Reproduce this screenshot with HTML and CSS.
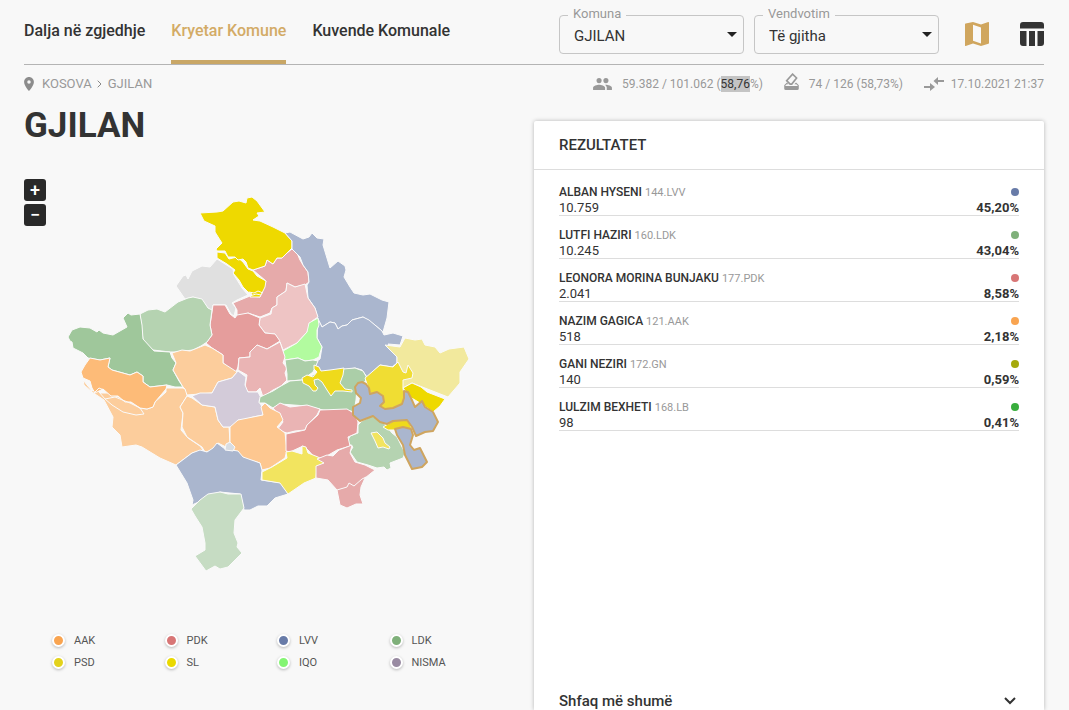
FILE: index.html
```html
<!DOCTYPE html>
<html lang="sq">
<head>
<meta charset="utf-8">
<title>Kryetar Komune – Gjilan</title>
<link rel="stylesheet" href="styles.css">
</head>
<body>
<div class="page">
  <header class="topbar">
    <nav class="tabs">
      <a class="tab" href="#dalja">Dalja në zgjedhje</a>
      <a class="tab tab-active" href="#kryetar">Kryetar Komune</a>
      <a class="tab" href="#kuvende">Kuvende Komunale</a>
    </nav>
    <div class="filters">
      <div class="field">
        <label class="field-label" for="komuna">Komuna</label>
        <select class="field-select" id="komuna"><option>GJILAN</option></select>
        <svg class="field-arrow" viewBox="0 0 10 5"><path d="M0 0h10L5 5z"/></svg>
      </div>
      <div class="field">
        <label class="field-label" for="vendvotim">Vendvotim</label>
        <select class="field-select" id="vendvotim"><option>Të gjitha</option></select>
        <svg class="field-arrow" viewBox="0 0 10 5"><path d="M0 0h10L5 5z"/></svg>
      </div>
      <button class="view view-active" type="button" aria-label="Harta"><svg viewBox="0 0 24 24"><path fill-rule="evenodd" d="M0 2.2Q0 1.7.6 1.5L8 0l8 2.5L23.300 0Q24 0 24 .6v20.500q0 .5-.6.7L16 24l-8-2.500L.7 24Q0 24 0 23.400zM8 2.800v16l8 2.600v-16z"/></svg></button>
      <button class="view" type="button" aria-label="Tabela"><svg viewBox="0 0 24 24"><path d="M0 6.500V3q0-3 3-3h18q3 0 3 3v3.500zM0 9h6.500v15H3q-3 0-3-3zM9 9h6v15H9zM17.500 9H24v12q0 3-3 3h-3.500z"/></svg></button>
    </div>
  </header>

  <div class="infobar">
    <nav class="crumbs">
      <svg class="pin" viewBox="5 2 14 20"><path fill-rule="evenodd" d="M12 2C8.130 2 5 5.130 5 9c0 5.250 7 13 7 13s7-7.750 7-13c0-3.870-3.130-7-7-7zm0 9.500a2.500 2.500 0 1 1 0-5 2.500 2.500 0 0 1 0 5z"/></svg>
      <a class="crumb" href="#kosova">KOSOVA</a>
      <svg class="chev" viewBox="0 0 5 8"><path d="M.7.700 4 4 .7 7.300"/></svg>
      <a class="crumb" href="#gjilan">GJILAN</a>
    </nav>
    <div class="stats">
      <span class="stat">
        <svg class="stat-people" viewBox="1 5 22 14"><path d="M16 11a3 3 0 1 0 0-6 3 3 0 0 0 0 6zm-8 0a3 3 0 1 0 0-6 3 3 0 0 0 0 6zm0 2c-2.330 0-7 1.170-7 3.500V19h14v-2.500C15 14.170 10.330 13 8 13zm8 0c-.29 0-.62.020-.97.050 1.160.84 1.970 1.970 1.970 3.450V19h6v-2.500c0-2.330-4.670-3.500-7-3.500z"/></svg>
        <span>59.382 / 101.062 (<mark class="marked">58,76</mark>%)</span>
      </span>
      <span class="stat">
        <svg class="stat-box" viewBox="3 1 18 21"><path d="m18 13-.68-.1L15.500 15H18l2 2H4l2-2h2.300l-1.800-2H6l-3 3.200V20a2 2 0 0 0 2 2h14a2 2 0 0 0 2-2v-3.800z"/><path class="ballot" d="m13.300 2.400 5 4.800-6 7.500h-2L6 10.500z"/></svg>
        <span>74 / 126 (58,73%)</span>
      </span>
      <span class="stat">
        <svg class="stat-sync" viewBox="0 0 20 14"><path d="M0 9h6V6l5 4-5 4v-3H0zM20 3h-6V0L9.500 4 14 8V5h6z"/></svg>
        <span>17.10.2021 21:37</span>
      </span>
    </div>
  </div>

  <main class="content">
    <section class="geo">
      <h1 class="title">GJILAN</h1>
      <div class="mapbox">
        <div class="zoom">
          <button class="zoom-btn" type="button">+</button>
          <button class="zoom-btn" type="button">−</button>
        </div>
        <svg class="map" viewBox="24 170 510 440" role="img" aria-label="Kosova">
          <g class="regions">
          <path class="c-grey" d="M217 259 225 264 233 269 234 275 242 288 248 295 237 300 232 303 236 308 234 316 231 314 226 305 213 305 211 313 202 300 193 297 185 299 176 286 183 276 186 275 188 279 192 271 202 266 210 267z"/>
          <path class="c-pdk2" d="M292 249 297 253 300 260 303 265 308 272 309 282 305 285 295 287 287 283 286 291 277 297 277 305 272 308 270 313 260 317 248 313 243 316 237 316 237 310 233 303 250 296 260 297 266 281 253 270 265 266 267 260 273 264 277 258 282 258 287 253z"/>
          <path class="c-sl" d="M217 252 225 253 229 259 237 257 243 262 248 269 253 271 257 276 266 281 265 287 262 293 260 297 250 297 252 294 248 292 243 287 239 280 233 273 235 270 227 264 217 258z"/>
          <path class="c-line" d="M249 292 254 293 258 291 263 293M250 296 256 294 261 295"/>
          <path class="c-sl" d="M200 213 217 212 223 211 233 202 239 201 246 203 247 198 252 197 257 201 265 212 257 213 259 216 253 220 260 221 273 227 285 233 292 241 292 248 287 253 282 258 277 258 273 264 267 260 265 266 253 270 248 268 246 262 243 259 238 260 235 257 228 257 225 251 217 251 216 249 222 243 220 240 215 232 215 226 204 221z"/>
          <path class="c-lvv" d="M285 233 290 232 303 239 309 237 312 233 317 238 324 239 323 245 330 268 338 261 345 266 346 270 344 277 350 287 354 293 363 295 370 294 382 300 389 302 387 318 383 332 375 325 363 317 352 320 347 325 342 326 338 329 335 323 330 322 322 327 318 319 315 308 308 298 307 285 309 282 308 272 303 265 300 257 292 249 292 241z"/>
          <path class="c-lvv" d="M318 319 322 327 330 322 335 323 338 329 342 326 347 325 352 320 363 317 369 320 382 331 384 335 393 333 403 336 400 345 388 344 397 357 397 363 392 367 380 365 367 377 362 370 355 368 343 370 320 372 312 365 320 359 322 347 317 338z"/>
          <path class="c-pdk1" d="M287 283 295 287 305 284 308 298 315 308 318 317 312 321 307 332 297 343 283 350 280 342 275 334 265 333 259 325 260 318 271 314 272 308 277 305 277 297 286 291z"/>
          <path class="c-pdk4" d="M213 305 225 305 230 314 235 318 237 315 248 313 260 318 259 325 265 333 275 334 280 341 267 349 257 345 250 352 250 357 239 358 238 367 236 372 232 370 223 363 223 355 220 353 212 348 206 343 212 335 210 325z"/>
          <path class="c-iqo" d="M318 318 319 325 317 330 317 338 322 347 320 353 319 357 313 360 305 361 298 358 285 360 283 351 297 343 307 332 309 323z"/>
          <path class="c-ldk2" d="M140 314 148 310 157 309 165 312 178 302 188 298 193 297 202 299 208 308 212 310 210 325 212 335 207 342 201 346 193 350 175 352 170 352 153 350 143 340z"/>
          <path class="c-ldk4" d="M68 337 72 330 80 327 90 328 97 332 99 330 103 333 113 335 127 327 123 318 128 313 131 315 140 314 142 325 143 339 154 351 170 352 172 358 176 363 173 370 179 381 183 387 175 387 167 385 150 387 143 382 143 376 137 372 130 375 112 370 108 367 110 358 100 360 88 358 83 353 73 348 72 342 70 341z"/>
          <path class="c-aak1" d="M83 380 92 391 96 389 100 393 109 393 123 399 134 404 140 408 147 409 153 407 155 402 166 392 166 388 183 388 187 390 187 396 180 407 183 413 181 430 188 438 200 446 203 450 192 453 176 465 160 458 142 447 136 445 122 447 120 435 112 427 113 417 104 400 92 392 84 385z"/>
          <path class="c-aak4" d="M90 358 100 360 110 358 108 367 112 370 130 375 137 372 143 376 143 382 150 387 167 385 166 389 155 402 153 407 147 409 140 408 131 402 125 402 118 396 111 396 103 389 95 393 92 388 90 381 83 378 81 372 85 365z"/>
          <path class="c-line" d="M94 393 99 388 104 390 99 392 105 399 115 397 130 403 140 408 144 414 136 415 123 412 112 405 105 399"/>
          <path class="c-aak1" d="M172 353 182 350 190 351 205 345 212 348 220 353 223 355 223 363 237 372 232 378 218 382 212 393 187 395 185 389 183 387 173 370 176 363z"/>
          <path class="c-aak1" d="M187 396 192 398 202 405 215 407 218 420 223 427 229 427 230 442 226 447 218 443 213 450 205 452 202 447 187 437 182 427 183 413 180 407z"/>
          <path class="c-pdk3" d="M280 342 285 357 283 363 287 368 285 373 287 380 281 386 273 390 263 397 260 388 256 392 248 392 245 387 247 375 238 370 239 358 250 357 250 352 257 345 267 349z"/>
          <path class="c-nisma" d="M192 396 200 393 212 393 218 382 232 378 238 371 246 377 245 385 248 392 258 392 261 398 259 401 262 407 263 415 253 417 243 420 238 420 235 427 223 427 218 420 215 407 202 405z"/>
          <path class="c-ldk3" d="M285 360 298 358 305 361 313 360 318 361 313 372 302 380 287 381 287 374z"/>
          <path class="c-ldk3" d="M260 397 273 391 281 386 290 381 302 380 315 374 343 369 355 368 363 371 367 378 364 383 357 388 356 400 354 412 347 410 335 411 323 410 307 406 280 404 273 408 265 403 259 403z"/>
          <path class="c-ldk2" d="M362 421 372 416 383 422 392 433 397 437 405 453 403 458 390 463 391 468 387 470 384 467 377 468 368 465 357 462 350 452 353 447 347 442 350 436 358 433 358 425z"/>
          <path class="c-psd4" d="M314 365 319 367 321 371 330 370 344 368 343 375 340 383 345 389 352 390 352 392 343 391 335 391 331 396 327 390 322 382 318 379 314 380 315 385 318 388 316 391 313 391 309 386 303 383 302 378 307 375 313 377 317 372 314 369z"/>
          <path class="c-pdk3" d="M273 408 280 403 290 407 307 405 320 409 317 415 307 425 305 430 295 431 287 433 277 430 283 422 280 416z"/>
          <path class="c-aak3" d="M230 427 238 420 253 417 263 415 261 407 265 403 270 408 280 413 283 420 277 427 285 433 287 450 285 458 270 468 262 470 260 463 250 460 242 458 235 452 230 442z"/>
          <path class="c-pdk4" d="M320 410 347 409 355 414 358 422 357 433 348 437 350 446 337 450 325 457 316 459 308 450 303 446 290 452 286 451 286 434 305 430 307 425 318 415z"/>
          <path class="c-lvv" d="M176 465 192 453 200 450 207 452 213 448 217 443 225 449 238 451 243 457 260 463 262 470 261 480 282 483 288 494 275 498 267 506 258 506 250 510 244 510 240 494 220 492 192 505 193 500 187 483z"/>
          <path class="c-psd2" d="M262 480 262 472 272 467 287 458 286 452 292 451 302 454 302 446 306 447 308 453 318 457 325 461 323 464 317 466 316 478 304 483 288 494 280 483z"/>
          <path class="c-pdk2" d="M317 459 327 455 333 456 339 450 352 445 350 453 355 462 365 465 375 470 365 478 361 487 360 495 363 504 356 504 347 508 340 505 337 490 328 480 316 478 316 466 324 463z"/>
          <path class="c-line" d="M337 490 347 487 349 483 354 486 362 479 366 477"/>
          <path class="c-ldk1" d="M191 509 200 500 208 494 220 492 228 494 241 494 244 508 235 520 234 533 238 543 237 547 242 553 228 567 220 569 215 566 206 571 195 556 205 550 205 543 202 527 195 516z"/>
          <path class="c-lake" d="M226 444 230 442 235 447 233 451 225 450z"/>
          <path class="c-psd2" d="M371 433 377 432 383 438 385 443 390 447 389 449 383 447 378 448 375 441z"/>
          <path class="c-psd1" d="M385 345 400 347 405 338 415 340 422 339 425 345 435 347 440 353 449 349 464 347 469 359 460 372 460 383 448 397 430 390 412 383 403 388 400 378 397 363 397 357z"/>
          <path class="c-psd3" d="M365 378 380 365 393 367 398 362 403 372 406 373 408 365 413 373 412 378 403 380 403 388 405 403 390 411 380 407 370 393z"/>
          <path class="c-sl" d="M403 388 412 383 421 387 427 392 445 399 440 406 433 412 420 403 410 397z"/>
          <path class="c-psd4" d="M383 427 395 420 408 420 412 429 397 430 388 430z"/>
          </g>
          <g class="picked">
            <path d="M358 383 362 382 366 384 369 388 370 394 377 392 383 396 384 402 380 406 385 409 393 408 402 404 404 398 404 391 408 392 411 398 415 407 422 401 425 407 433 412 438 422 433 431 425 432 416 436 412 427 407 420 393 421 387 424 380 422 373 416 360 421 353 415 353 407 360 403 361 398 356 393 355 387z"/>
            <path d="M395 429 403 427 411 429 413 435 410 445 414 450 420 448 427 462 422 467 412 469 405 455 403 445 397 435z"/>
          </g>
        </svg>
      </div>
      <ul class="legend">
        <li class="legend-item"><span class="legend-dot aak"></span>AAK</li>
        <li class="legend-item"><span class="legend-dot pdk"></span>PDK</li>
        <li class="legend-item"><span class="legend-dot lvv"></span>LVV</li>
        <li class="legend-item"><span class="legend-dot ldk"></span>LDK</li>
        <li class="legend-item"><span class="legend-dot psd"></span>PSD</li>
        <li class="legend-item"><span class="legend-dot sl"></span>SL</li>
        <li class="legend-item"><span class="legend-dot iqo"></span>IQO</li>
        <li class="legend-item"><span class="legend-dot nisma"></span>NISMA</li>
      </ul>
    </section>

    <section class="card">
      <h2 class="card-title">REZULTATET</h2>
      <ul class="results">
        <li class="result"><div class="line"><span class="name">ALBAN HYSENI <small class="party">144.LVV</small></span><span class="dot lvv"></span></div><div class="line"><span class="votes">10.759</span><strong class="share">45,20%</strong></div></li>
        <li class="result"><div class="line"><span class="name">LUTFI HAZIRI <small class="party">160.LDK</small></span><span class="dot ldk"></span></div><div class="line"><span class="votes">10.245</span><strong class="share">43,04%</strong></div></li>
        <li class="result"><div class="line"><span class="name">LEONORA MORINA BUNJAKU <small class="party">177.PDK</small></span><span class="dot pdk"></span></div><div class="line"><span class="votes">2.041</span><strong class="share">8,58%</strong></div></li>
        <li class="result"><div class="line"><span class="name">NAZIM GAGICA <small class="party">121.AAK</small></span><span class="dot aak"></span></div><div class="line"><span class="votes">518</span><strong class="share">2,18%</strong></div></li>
        <li class="result"><div class="line"><span class="name">GANI NEZIRI <small class="party">172.GN</small></span><span class="dot gn"></span></div><div class="line"><span class="votes">140</span><strong class="share">0,59%</strong></div></li>
        <li class="result"><div class="line"><span class="name">LULZIM BEXHETI <small class="party">168.LB</small></span><span class="dot lb"></span></div><div class="line"><span class="votes">98</span><strong class="share">0,41%</strong></div></li>
      </ul>
      <button class="more" type="button"><span>Shfaq më shumë</span><svg class="more-icon" viewBox="0 0 12 8"><path d="m1 1 5 5 5-5"/></svg></button>
    </section>
  </main>
</div>
</body>
</html>
```

FILE: styles.css
```css
* { box-sizing: border-box; }

body {
  margin: 0;
  background: #f8f8f8;
  color: #333;
  font-family: Roboto, sans-serif;
}

a { color: inherit; text-decoration: none; }
ul { list-style: none; margin: 0; padding: 0; }
button { font-family: inherit; border: 0; padding: 0; background: none; color: inherit; cursor: pointer; }
svg { display: block; }

.page {
  display: flex;
  flex-direction: column;
  min-height: 100vh;
  padding: 0 25px 0 24px;
}

/* Top bar */
.topbar {
  display: flex;
  justify-content: space-between;
  height: 65px;
  border-bottom: 1px solid #b4b4b4;
}
.tabs { display: flex; gap: 26px; }
.tab {
  height: 64px;
  padding-top: 20px;
  font-size: 16px;
  line-height: 22px;
  font-weight: 500;
  white-space: nowrap;
}
.tab-active { color: #d3ab66; border-bottom: 4px solid #c9a766; }

.filters { display: flex; align-items: flex-start; padding-top: 15px; }
.field { position: relative; width: 185px; margin-right: 10px; }
.field-label {
  position: absolute;
  top: -10px;
  left: 9px;
  padding: 0 5px;
  background: #f8f8f8;
  color: #999;
  font-size: 13px;
  line-height: 18px;
}
.field-select {
  display: block;
  width: 100%;
  height: 39px;
  padding: 2px 14px 0;
  border: 1px solid #c6c6c6;
  border-radius: 4px;
  background: transparent;
  color: #333;
  font-family: inherit;
  font-size: 15px;
  appearance: none;
}
.field-arrow { position: absolute; top: 17px; right: 7px; width: 10px; fill: #222; pointer-events: none; }
.view { width: 24px; height: 24px; margin: 7px 0 0 16px; fill: #333; }
.view + .view { margin-left: 31px; }
.view svg { width: 24px; height: 24px; }
.view-active { fill: #d0a65e; }

/* Breadcrumbs and turnout */
.infobar {
  display: flex;
  justify-content: space-between;
  align-items: center;
  height: 37px;
  color: #999;
  font-size: 13px;
}
.crumbs { display: flex; align-items: center; }
.pin { width: 10px; height: 14px; margin-right: 8px; fill: #8c8c8c; }
.chev { width: 5px; height: 8px; margin: 0 6px 0 5px; fill: none; stroke: #888; }
.stats { display: flex; gap: 21px; font-size: 12px; }
.stat { display: flex; align-items: center; }
.stat svg { fill: #999; }
.stat-people { width: 19px; height: 12px; margin-right: 10px; }
.stat .stat-box { width: 15px; height: 17px; margin: -4px 10px 0 0; }
.stat-sync { width: 20px; height: 14px; margin-right: 7px; }
.ballot { fill: none; stroke: #999; stroke-width: 2; }
.marked { padding: 1px 0; background: #c4c4c4; color: #333; }

/* Main columns */
.content {
  flex: 1;
  display: grid;
  grid-template-columns: 1fr 1fr;
}
.title { margin: 2px 0 0; font-size: 35px; line-height: 44px; font-weight: 700; }
.mapbox { position: relative; margin-top: 22px; }
.map { width: 100%; }
.zoom {
  position: absolute;
  top: 9px;
  left: 0;
  display: grid;
  gap: 3px;
}
.zoom-btn {
  width: 22px;
  height: 22px;
  border-radius: 3px;
  background: #292929;
  color: #fff;
  font-size: 18px;
  line-height: 22px;
  font-weight: 500;
}

.regions path { stroke: #fafafa; stroke-width: 1; stroke-linejoin: round; }
.regions .c-line { fill: none; }
.c-grey { fill: #e0e0e0; }
.c-lake { fill: #d9dde2; }
.c-sl { fill: #eed900; }
.c-lvv { fill: #aab6ce; }
.c-iqo { fill: #b2fb9f; }
.c-nisma { fill: #d3cbd9; }
.c-pdk1 { fill: #eec4c4; }
.c-pdk2 { fill: #e6aaaa; }
.c-pdk3 { fill: #eab4b4; }
.c-pdk4 { fill: #e59d9c; }
.c-ldk1 { fill: #c6dcc3; }
.c-ldk2 { fill: #b5d3b1; }
.c-ldk3 { fill: #abcea8; }
.c-ldk4 { fill: #9fc79b; }
.c-aak1 { fill: #fccd9c; }
.c-aak3 { fill: #fdc790; }
.c-aak4 { fill: #fdbb78; }
.c-psd1 { fill: #f2e99d; }
.c-psd2 { fill: #f2e45f; }
.c-psd3 { fill: #f0dd33; }
.c-psd4 { fill: #efda1b; }
.picked path { fill: #aab6ce; stroke: #cfa55f; stroke-width: 2; stroke-linejoin: round; }

.legend {
  display: grid;
  grid-template-columns: repeat(4, 1fr);
  margin: 19px 32px 0 28px;
}
.legend-item {
  display: flex;
  align-items: center;
  gap: 9px;
  height: 22px;
  color: #555;
  font-size: 11px;
}
.legend-dot {
  width: 13px;
  height: 13px;
  border: 2px solid #fff;
  border-radius: 50%;
  box-shadow: 0 1px 3px #0004;
}
.dot { width: 8px; height: 8px; border-radius: 50%; }
.aak { background-color: #f9a450; }
.pdk { background-color: #d87676; }
.lvv { background-color: #687ba8; }
.ldk { background-color: #7fb07a; }
.psd { background-color: #e3d21c; }
.sl { background-color: #ead900; }
.iqo { background-color: #84f573; }
.nisma { background-color: #998ba2; }
.gn { background-color: #a5a90c; }
.lb { background-color: #38ad3d; }

/* Results card */
.card {
  display: flex;
  flex-direction: column;
  margin-top: 19px;
  border-radius: 2px 2px 0 0;
  background: #fff;
  box-shadow: 0 0 4px #0004;
}
.card-title {
  margin: 0;
  padding: 0 25px;
  border-bottom: 1px solid #ddd;
  font-size: 15px;
  line-height: 48px;
  font-weight: 500;
}
.results { flex: 1; padding: 3px 25px 0; }
.result { padding-top: 11px; border-bottom: 1px solid #ddd; }
.line {
  display: flex;
  justify-content: space-between;
  align-items: center;
  height: 16px;
}
.line + .line { height: 15px; }
.name { font-size: 12px; font-weight: 500; }
.party { color: #999; font-size: 11px; font-weight: 400; }
.votes, .share { font-size: 13px; line-height: 15px; }
.more {
  display: flex;
  justify-content: space-between;
  align-items: center;
  padding: 0 28px 0 25px;
  font-size: 15px;
  line-height: 18px;
  font-weight: 500;
}
.more-icon { width: 12px; height: 8px; fill: none; stroke: #333; stroke-width: 2; }
```
